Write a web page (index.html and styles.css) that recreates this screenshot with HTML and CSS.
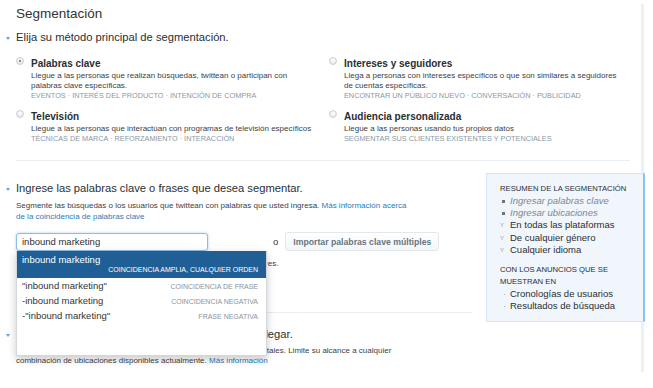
FILE: index.html
```html
<!DOCTYPE html>
<html lang="es">
<head>
  <meta charset="UTF-8" />
  <meta name="viewport" content="width=device-width, initial-scale=1.0" />
  <title>Segmentación</title>
  <link rel="stylesheet" href="styles.css">
</head>
<body>
  <div class="main">
    <h1 class="title">Segmentación</h1>

    <section class="step step-method">
      <h2 class="step-head"><span class="caret"></span>Elija su método principal de segmentación.</h2>
      <div class="methods">
        <div class="method">
          <span class="radio checked"></span>
          <div class="method-body">
            <span class="method-name">Palabras clave</span>
            <span class="method-desc">Llegue a las personas que realizan búsquedas, twittean o participan con palabras clave específicas.</span>
            <span class="method-tags">Eventos · Interés del producto · Intención de compra</span>
          </div>
        </div>
        <div class="method">
          <span class="radio"></span>
          <div class="method-body">
            <span class="method-name">Intereses y seguidores</span>
            <span class="method-desc">Llega a personas con intereses específicos o que son similares a seguidores de cuentas específicas.</span>
            <span class="method-tags">Encontrar un público nuevo · Conversación · Publicidad</span>
          </div>
        </div>
        <div class="method">
          <span class="radio"></span>
          <div class="method-body">
            <span class="method-name">Televisión</span>
            <span class="method-desc">Llegue a las personas que interactúan con programas de televisión específicos</span>
            <span class="method-tags">Técnicas de marca · Reforzamiento · Interacción</span>
          </div>
        </div>
        <div class="method">
          <span class="radio"></span>
          <div class="method-body">
            <span class="method-name">Audiencia personalizada</span>
            <span class="method-desc">Llegue a las personas usando tus propios datos</span>
            <span class="method-tags">Segmentar sus clientes existentes y potenciales</span>
          </div>
        </div>
      </div>
    </section>

    <section class="step step-keywords">
      <div class="kw-main">
        <h2 class="step-head"><span class="caret"></span>Ingrese las palabras clave o frases que desea segmentar.</h2>
        <p class="help">Segmente las búsquedas o los usuarios que twittean con palabras que usted ingresa. <a href="#">Más información acerca de la coincidencia de palabras clave</a></p>

        <div class="kw-row">
          <div class="kw-field">
            <input class="kw-input" type="text" value="inbound marketing" />
            <ul class="suggest">
              <li class="active">
                <span class="term">inbound marketing</span>
                <span class="kind">Coincidencia amplia, cualquier orden</span>
              </li>
              <li><span class="term">"inbound marketing"</span><span class="kind">Coincidencia de frase</span></li>
              <li><span class="term">-inbound marketing</span><span class="kind">Coincidencia negativa</span></li>
              <li><span class="term">-"inbound marketing"</span><span class="kind">Frase negativa</span></li>
            </ul>
          </div>
          <span class="or">o</span>
          <button class="btn">Importar palabras clave múltiples</button>
        </div>

        <p class="help hint">Le recomendamos agregar al menos 25 palabras clave o frases similares.</p>

        <div class="sub-step">
          <h2 class="step-head"><span class="caret"></span>Elija las ubicaciones geográficas a las que desea llegar.</h2>
          <p class="help loc">Ingrese países, estados, regiones, áreas metropolitanas o códigos postales. Limite su alcance a cualquier combinación de ubicaciones disponibles actualmente. <a href="#">Más información</a></p>
        </div>
      </div>

      <aside class="summary">
        <h3 class="summary-title">Resumen de la segmentación</h3>
        <ul>
          <li class="pending"><span class="mark mark-sq"></span>Ingresar palabras clave</li>
          <li class="pending"><span class="mark mark-sq"></span>Ingresar ubicaciones</li>
          <li><span class="mark">Y</span>En todas las plataformas</li>
          <li><span class="mark">Y</span>De cualquier género</li>
          <li><span class="mark">Y</span>Cualquier idioma</li>
        </ul>
        <h3 class="summary-title second">Con los anuncios que se muestran en</h3>
        <ul>
          <li><span class="mark dot">·</span>Cronologías de usuarios</li>
          <li><span class="mark dot">·</span>Resultados de búsqueda</li>
        </ul>
      </aside>
    </section>
  </div>
</body>
</html>
```

FILE: styles.css
```css
* {
  box-sizing: border-box;
}
body {
  margin: 0;
  background: #fff;
  font-family: "Liberation Sans", Arial, sans-serif;
  color: #333;
}
.main {
  width: 644px;
  height: 368px;
  margin-top: 4px;
  padding: 0 11px 0 16px;
  border-right: 3px solid #eef0f2;
}
.title {
  margin: 0;
  padding-top: 2px;
  font-size: 13.5px;
  line-height: 16px;
  font-weight: normal;
  color: #333;
}
.step-head {
  margin: 5px 0 0 -10px;
  font-size: 11.2px;
  line-height: 14px;
  font-weight: normal;
  color: #292f33;
}
.step-method .step-head {
  margin-top: 8px;
}
.caret {
  display: inline-block;
  vertical-align: middle;
  width: 0;
  height: 0;
  border-left: 2.5px solid transparent;
  border-right: 2.5px solid transparent;
  border-top: 3px solid #5ea6dd;
  margin-right: 6px;
}

/* step 1: method */
.step-method {
  border-bottom: 1px solid #eaedef;
  padding-bottom: 16.5px;
  margin-bottom: 12px;
}
.methods {
  display: grid;
  grid-template-columns: 313px 288px;
  row-gap: 10px;
  margin-top: 13.5px;
}
.method {
  display: flex;
  align-items: flex-start;
}
.radio {
  position: relative;
  flex: none;
  width: 8px;
  height: 8px;
  margin: -1px 7px 0 0;
  border-radius: 50%;
  border: 1px solid #cdd1d4;
  background: radial-gradient(circle at 50% 35%, #fff, #dde1e4);
}
.radio.checked::after {
  content: "";
  position: absolute;
  left: 2px;
  top: 2px;
  width: 2px;
  height: 2px;
  border-radius: 50%;
  background: #666;
}
.method-body {
  display: flex;
  flex-direction: column;
  max-width: 284px;
}
.method-name {
  font-size: 10px;
  font-weight: bold;
  line-height: 12px;
  color: #292f33;
}
.method-desc {
  margin-top: 1px;
  font-size: 8px;
  line-height: 10px;
  color: #3c4246;
}
.method-tags {
  font-size: 7.3px;
  line-height: 10px;
  color: #8899a6;
  text-transform: uppercase;
}

/* step 2: keywords */
.step-keywords {
  display: flex;
  align-items: flex-start;
}
.kw-main {
  width: 456px;
  flex: none;
  padding-top: 3px;
}
.help {
  margin: 5px 0 0;
  max-width: 396px;
  font-size: 8px;
  line-height: 11px;
  color: #3c4246;
}
.help a {
  color: #2b7bb9;
  text-decoration: none;
}
.kw-row {
  display: flex;
  align-items: center;
  margin-top: 10px;
}
.kw-field {
  position: relative;
  width: 192px;
}
.kw-input {
  display: block;
  width: 192px;
  height: 18px;
  padding: 0 5px;
  border: 1px solid #8cbde6;
  border-radius: 3px;
  box-shadow: 0 0 3px rgba(94, 166, 221, 0.5);
  font: 9.5px "Liberation Sans", Arial, sans-serif;
  color: #292f33;
  outline: none;
}
.or {
  margin: 0 7px 0 65px;
  font-size: 9.5px;
  color: #333;
}
.btn {
  height: 19px;
  padding: 0 7px;
  border: 1px solid #e1e8ed;
  border-radius: 3px;
  background: linear-gradient(#fff, #f3f6f8);
  font: bold 8.7px "Liberation Sans", Arial, sans-serif;
  color: #66757f;
}
.suggest {
  position: absolute;
  left: 0;
  top: 100%;
  z-index: 2;
  width: 251px;
  height: 105px;
  margin: 0;
  padding: 0;
  list-style: none;
  background: #fff;
  border: 1px solid #d3d7db;
  border-top: none;
  box-shadow: 0 3px 8px rgba(0, 0, 0, 0.22);
}
.suggest li {
  display: flex;
  justify-content: space-between;
  align-items: baseline;
  height: 15px;
  line-height: 15px;
  padding: 0 8px 0 5px;
  font-size: 9.5px;
  color: #333;
}
.suggest .kind {
  font-size: 7px;
  color: #8c9399;
  text-transform: uppercase;
}
.suggest li.active {
  display: block;
  height: 27px;
  padding-top: 3px;
  background: #1f5f96;
  color: #fff;
}
.suggest li.active .term {
  display: block;
  line-height: 11px;
}
.suggest li.active .kind {
  display: block;
  text-align: right;
  line-height: 9px;
  color: #fff;
}
.hint {
  margin-top: 7px;
}

/* step 3: locations */
.sub-step {
  margin-top: 43px;
  padding-top: 9px;
  border-top: 1px solid #eaedef;
}
.help.loc {
  line-height: 10px;
}

/* summary */
.summary {
  flex: none;
  width: 159px;
  height: 149px;
  margin: 0 -15px 0 14px;
  padding: 9px 6px 0 13px;
  background: #f0f6fc;
  border: 1px solid #d5e5f4;
  border-right: 2px solid #8cc3ee;
  font-size: 9.5px;
  color: #292f33;
}
.summary-title {
  margin: 0;
  font-size: 7.7px;
  line-height: 12px;
  font-weight: normal;
  text-transform: uppercase;
}
.summary-title.second {
  margin-top: 8px;
}
.summary ul {
  margin: 0;
  padding: 0;
  list-style: none;
}
.summary li {
  display: flex;
  align-items: center;
  line-height: 12.2px;
}
.summary li.pending {
  font-style: italic;
  color: #7a8893;
}
.mark {
  flex: none;
  width: 10px;
  font-size: 6px;
  font-style: normal;
  color: #999;
}
.mark.dot {
  padding-left: 3px;
  font-size: 9px;
}
.mark-sq::before {
  content: "";
  display: inline-block;
  vertical-align: middle;
  width: 3px;
  height: 3px;
  margin-left: 2px;
  background: #6e7479;
}
```
